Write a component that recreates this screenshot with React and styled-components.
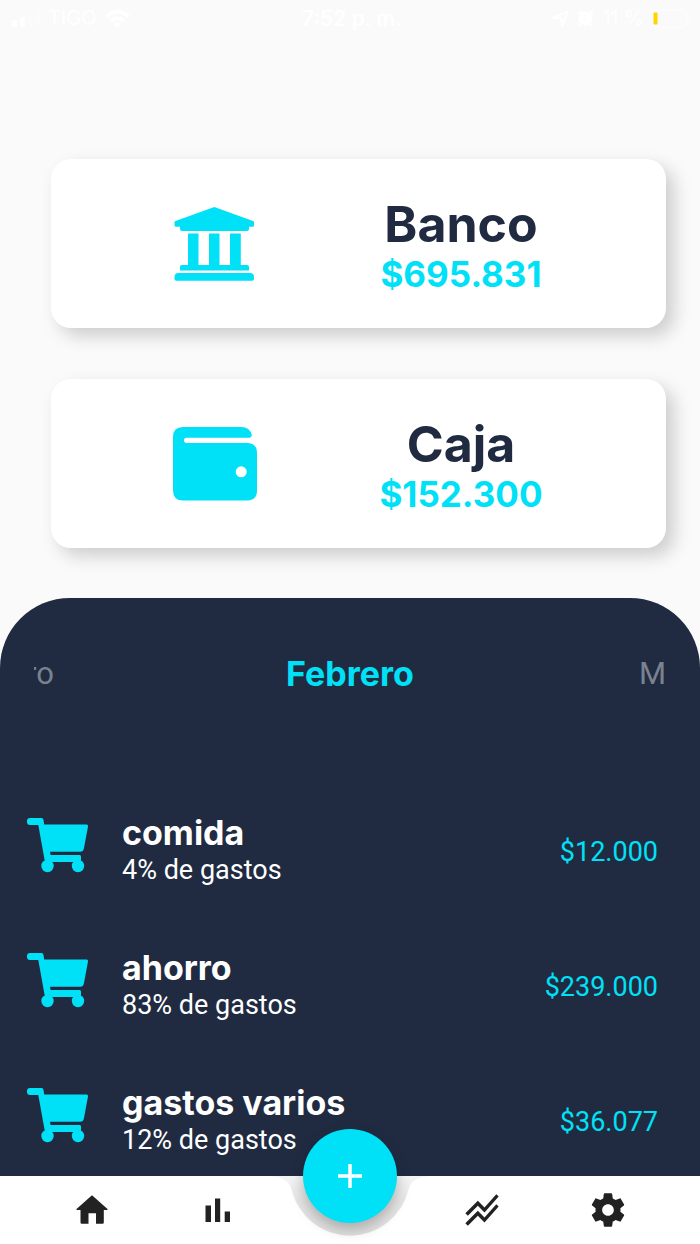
import React from "react";
import styled, { createGlobalStyle } from "styled-components";

const NAVY = "#202b42";
const CYAN = "#00e1f7";

const GlobalStyle = createGlobalStyle`
  *, *::before, *::after { box-sizing: border-box; }
  body {
    margin: 0;
    background: #fafafa;
    font-family: Inter, "Liberation Sans", sans-serif;
    color: ${NAVY};
  }
  button { font: inherit; border: 0; padding: 0; background: none; cursor: pointer; }
  h2, h3, p, ul { margin: 0; padding: 0; }
`;

const Screen = styled.div`
  display: flex;
  flex-direction: column;
  min-height: 100vh;
`;

const StatusBar = styled.header`
  display: grid;
  grid-template-columns: 1fr auto 1fr;
  align-items: center;
  height: 36px;
  padding: 0 8px 0 12px;
  color: #fff;
  font-size: 20px;
`;

const StatusGroup = styled.div`
  display: flex;
  align-items: center;
  justify-content: ${(p) => (p.$end ? "flex-end" : "flex-start")};
  gap: 8px;
`;

const Clock = styled.time`
  font-size: 21px;
  font-weight: 600;
`;

const Accounts = styled.section`
  display: flex;
  flex-direction: column;
  gap: 51px;
  padding: 123px 34px 50px 51px;
`;

const AccountCard = styled.article`
  display: grid;
  grid-template-columns: 1fr 1fr;
  align-items: center;
  justify-items: center;
  height: 169px;
  padding: 0 82px 0 41px;
  border-radius: 20px;
  background: #fff;
  box-shadow: 8px 8px 18px rgba(0, 0, 0, 0.18);
`;

const AccountText = styled.div`
  padding-top: 4px;
  text-align: center;
  white-space: nowrap;
`;

const AccountName = styled.h2`
  font-size: 50px;
  line-height: 56px;
  font-weight: 700;
`;

const AccountTotal = styled.p`
  color: ${CYAN};
  font-size: 35px;
  line-height: 44px;
  font-weight: 700;
`;

const Panel = styled.section`
  flex: 1;
  padding: 56px 42px 16px 26px;
  border-radius: 70px 70px 0 0;
  background: ${NAVY};
  color: #fff;
`;

const Months = styled.div`
  display: grid;
  grid-template-columns: 1fr auto 1fr;
  align-items: center;
  height: 40px;
  margin: 0 -8px 124px 8px;
`;

const SideMonth = styled.button`
  display: flex;
  justify-content: flex-end;
  justify-self: ${(p) => (p.$end ? "end" : "start")};
  width: ${(p) => (p.$end ? "28px" : "20px")};
  overflow: hidden;
  color: #7b828f;
  font-family: Roboto, sans-serif;
  font-size: 31px;
  line-height: 40px;
`;

const CurrentMonth = styled.h2`
  color: ${CYAN};
  font-size: 34px;
  line-height: 40px;
  font-weight: 700;
`;

const Expenses = styled.ul`
  display: flex;
  flex-direction: column;
  gap: 67px;
  list-style: none;
`;

const Expense = styled.li`
  display: grid;
  grid-template-columns: 64px 1fr auto;
  align-items: center;
  column-gap: 32px;
  height: 68px;
`;

const CartSvg = styled.svg`
  align-self: start;
`;

const ExpenseName = styled.h3`
  margin-bottom: 6px;
  font-size: 34px;
  line-height: 30px;
  font-weight: 700;
`;

const ExpenseShare = styled.p`
  font-family: Roboto, sans-serif;
  font-size: 27px;
  line-height: 32px;
`;

const ExpenseAmount = styled.p`
  color: ${CYAN};
  font-family: Roboto, sans-serif;
  font-size: 27px;
  line-height: 32px;
`;

const TabBar = styled.nav`
  position: sticky;
  bottom: 0;
  display: grid;
  grid-template-columns: 1fr 1fr 138px 1fr 1fr;
  height: 68px;
  padding: 0 29px;
  background: #fff;
`;

const Tab = styled.button`
  display: grid;
  place-items: center;
  color: #222;
`;

const TabCenter = styled.div`
  position: relative;
  display: flex;
  justify-content: center;
`;

const AddButton = styled.button`
  position: absolute;
  top: -47px;
  display: grid;
  place-items: center;
  width: 94px;
  height: 94px;
  border-radius: 50%;
  background: ${CYAN};
  box-shadow: 0 6px 14px rgba(0, 0, 0, 0.25);
`;

const SignalIcon = () => (
  <svg width="28" height="18" viewBox="0 0 28 18" fill="#fff" aria-hidden="true">
    <rect x="0" y="11" width="5" height="7" rx="2" />
    <rect x="8" y="8" width="5" height="10" rx="2" />
    <rect x="16" y="4" width="5" height="14" rx="2" opacity="0.3" />
    <rect x="23" y="0" width="5" height="18" rx="2" opacity="0.3" />
  </svg>
);

const WifiIcon = () => (
  <svg width="25" height="19" viewBox="0 0 25 19" fill="none" stroke="#fff" strokeWidth="4" aria-hidden="true">
    <path d="M1.500 7.500Q12.500-2.500 23.500 7.500M6 12q6.500-5.500 13 0" />
    <path d="M8.500 14.500L12.500 19l4-4.500q-4-3-8 0z" fill="#fff" stroke="none" />
  </svg>
);

const LocationIcon = () => (
  <svg width="17" height="17" viewBox="0 0 17 17" fill="none" stroke="#fff" strokeWidth="2" strokeLinejoin="round" aria-hidden="true">
    <path d="M1 8L16 1 10 16 9 8z" />
  </svg>
);

const AlarmIcon = () => (
  <svg width="17" height="17" viewBox="0 0 17 17" aria-hidden="true">
    <circle cx="8.500" cy="8.500" r="7" fill="#fff" />
    <path d="M1 4l3-3M13 1l3 3M4 14l-2 2M13 14l2 2" stroke="#fff" strokeWidth="2" />
    <path d="M8.500 4.500v4.500H5" fill="none" stroke="#fafafa" strokeWidth="1.200" />
  </svg>
);

const BatteryIcon = () => (
  <svg width="40" height="19" viewBox="0 0 40 19" aria-hidden="true">
    <rect x="0.500" y="1" width="34" height="17" rx="5" fill="none" stroke="#fdfdfd" strokeWidth="1.500" />
    <rect x="1.500" y="3.500" width="4" height="12" rx="1" fill="#ffd400" />
    <path d="M37.500 6.500q3 3 0 6z" fill="#fdfdfd" />
  </svg>
);

const BankIcon = () => (
  <svg width="90" height="80" viewBox="0 0 90 80" fill={CYAN} aria-hidden="true">
    <path d="M44.300 3L83 17q1 .4 1 1.500v3q0 1.200-1.200 1.200H79v2.300q0 2-2 2H12q-2 0-2-2v-2.300H6.200Q4.500 22.700 4.500 21.200v-2.700Q4.500 17.300 5.500 17z" />
    <path d="M18 29.500h10.500V61H39V29.500h10.500V61H60V29.500h10.800V61H77q2 0 2 2v3.500H10V63q0-2 2-2h6z" />
    <path d="M8.500 69H80q4 0 4 4v2q0 1.800-1.800 1.800H6.300Q4.500 76.800 4.500 75v-2q0-4 4-4z" />
  </svg>
);

const WalletIcon = () => (
  <svg width="90" height="80" viewBox="0 0 90 80" fill={CYAN} aria-hidden="true">
    <path
      fillRule="evenodd"
      d="M13 3H71q9 0 10.700 8 0 2.700-2.700 2.700H16a2.700 2.700 0 0 0 0 5.300H77q10 0 10 10V66.500q0 10-10 10H13Q3 76.500 3 66.500V13Q3 3 13 3zM71.200 42.300a5.500 5.500 0 1 0 .01 11a5.500 5.500 0 1 0-.01-11z"
    />
  </svg>
);

const CartIcon = () => (
  <CartSvg width="64" height="56" viewBox="0 4 64 56" fill={CYAN} aria-hidden="true">
    <path d="M4 4H15.500q1.800 0 2 2l.7 4.500H60.500q1.800 0 1.500 2L57.800 35q-.6 2.700-3 2.700H24l.5 3.300H53.500q1.800 0 1.500 2v2.700q0 2.300-2.300 2.300H21.500q-2.500 0-3-2.600L12.300 11H4Q1 11 1 8V7q0-3 3-3z" />
    <circle cx="21.500" cy="52" r="6.200" />
    <circle cx="52" cy="52" r="6.200" />
  </CartSvg>
);

const HomeIcon = () => (
  <svg width="40" height="40" viewBox="0 0 40 40" fill="currentColor" aria-hidden="true">
    <path d="M20 5.300L35.500 19v1h-3.700v12.500q0 1.200-1.200 1.200H24V23.300h-7.500v10.400H9.700q-1.200 0-1.200-1.200V20H4.500v-1z" />
  </svg>
);

const BarsIcon = () => (
  <svg width="40" height="40" viewBox="0 0 40 40" fill="currentColor" aria-hidden="true">
    <path d="M7.500 15.500h5.500V32H7.500zM17 8.500h5.200V32H17zM26.700 21.500H32V32h-5.300z" />
  </svg>
);

const TrendIcon = () => (
  <svg width="40" height="40" viewBox="0 0 24 24" fill="currentColor" aria-hidden="true">
    <path d="M2 19.990l7.500-7.510 4 4 7.090-7.970L22 9.920l-8.500 9.560-4-4-6 6.010-1.500-1.500zm1.500-4.500l6-6.010 4 4L22 3.920l-1.410-1.410-7.090 7.970-4-4L2 13.990l1.500 1.500z" />
  </svg>
);

const GearIcon = () => (
  <svg width="40" height="40" viewBox="0 0 24 24" fill="currentColor" aria-hidden="true">
    <path d="M19.430 12.980c.04-.32.07-.64.07-.98s-.03-.66-.07-.98l2.110-1.650c.19-.15.24-.42.12-.64l-2-3.460c-.12-.22-.39-.3-.61-.22l-2.490 1c-.52-.4-1.080-.73-1.690-.98l-.38-2.650C14.460 2.180 14.250 2 14 2h-4c-.25 0-.46.18-.49.42l-.38 2.650c-.61.25-1.170.59-1.690.98l-2.490-1c-.23-.09-.49 0-.61.22l-2 3.460c-.13.22-.07.49.12.64l2.110 1.650c-.04.32-.07.65-.07.98s.03.66.07.98l-2.110 1.650c-.19.15-.24.42-.12.64l2 3.460c.12.22.39.3.61.22l2.490-1c.52.4 1.080.73 1.690.98l.38 2.650c.03.24.24.42.49.42h4c.25 0 .46-.18.49-.42l.38-2.650c.61-.25 1.170-.59 1.690-.98l2.490 1c.23.09.49 0 .61-.22l2-3.460c.12-.22.07-.49-.12-.64l-2.110-1.650zM12 15.500c-1.930 0-3.500-1.570-3.500-3.500s1.570-3.500 3.500-3.500 3.500 1.570 3.500 3.500-1.570 3.500-3.500 3.500z" />
  </svg>
);

const PlusIcon = () => (
  <svg width="26" height="26" viewBox="0 0 26 26" stroke="#fff" strokeWidth="3.500" aria-hidden="true">
    <path d="M13 1v24M1 13h24" />
  </svg>
);

const NotchShape = styled.svg`
  flex: none;
`;

const Notch = () => (
  <NotchShape width="160" height="68" viewBox="0 0 160 68" aria-hidden="true">
    <defs>
      <linearGradient id="notch-shade" x1="0" y1="0" x2="0" y2="1">
        <stop offset="0" stopColor="#f5f5f5" />
        <stop offset="0.4" stopColor="#e6e6e6" />
        <stop offset="1" stopColor="#e0e0e0" />
      </linearGradient>
    </defs>
    <path d="M0 0H160Q142 1 138.500 13A60 60 0 0 1 21.500 13Q18 1 0 0z" fill="url(#notch-shade)" />
  </NotchShape>
);

const accounts = [
  { name: "Banco", total: "$695.831", Icon: BankIcon },
  { name: "Caja", total: "$152.300", Icon: WalletIcon },
];

const expenses = [
  { name: "comida", share: "4% de gastos", amount: "$12.000" },
  { name: "ahorro", share: "83% de gastos", amount: "$239.000" },
  { name: "gastos varios", share: "12% de gastos", amount: "$36.077" },
];

export default function App() {
  return (
    <Screen>
      <GlobalStyle />
      <StatusBar>
        <StatusGroup>
          <SignalIcon />
          <span>TIGO</span>
          <WifiIcon />
        </StatusGroup>
        <Clock>7:52 p. m.</Clock>
        <StatusGroup $end>
          <LocationIcon />
          <AlarmIcon />
          <span>11 %</span>
          <BatteryIcon />
        </StatusGroup>
      </StatusBar>

      <Accounts>
        {accounts.map(({ name, total, Icon }) => (
          <AccountCard key={name}>
            <Icon />
            <AccountText>
              <AccountName>{name}</AccountName>
              <AccountTotal>{total}</AccountTotal>
            </AccountText>
          </AccountCard>
        ))}
      </Accounts>

      <Panel>
        <Months>
          <SideMonth aria-label="Enero">ro</SideMonth>
          <CurrentMonth>Febrero</CurrentMonth>
          <SideMonth $end aria-label="Marzo">M</SideMonth>
        </Months>
        <Expenses>
          {expenses.map((e) => (
            <Expense key={e.name}>
              <CartIcon />
              <div>
                <ExpenseName>{e.name}</ExpenseName>
                <ExpenseShare>{e.share}</ExpenseShare>
              </div>
              <ExpenseAmount>{e.amount}</ExpenseAmount>
            </Expense>
          ))}
        </Expenses>
      </Panel>

      <TabBar>
        <Tab aria-label="Inicio"><HomeIcon /></Tab>
        <Tab aria-label="Gastos"><BarsIcon /></Tab>
        <TabCenter>
          <Notch />
          <AddButton aria-label="Agregar"><PlusIcon /></AddButton>
        </TabCenter>
        <Tab aria-label="Tendencias"><TrendIcon /></Tab>
        <Tab aria-label="Ajustes"><GearIcon /></Tab>
      </TabBar>
    </Screen>
  );
}
